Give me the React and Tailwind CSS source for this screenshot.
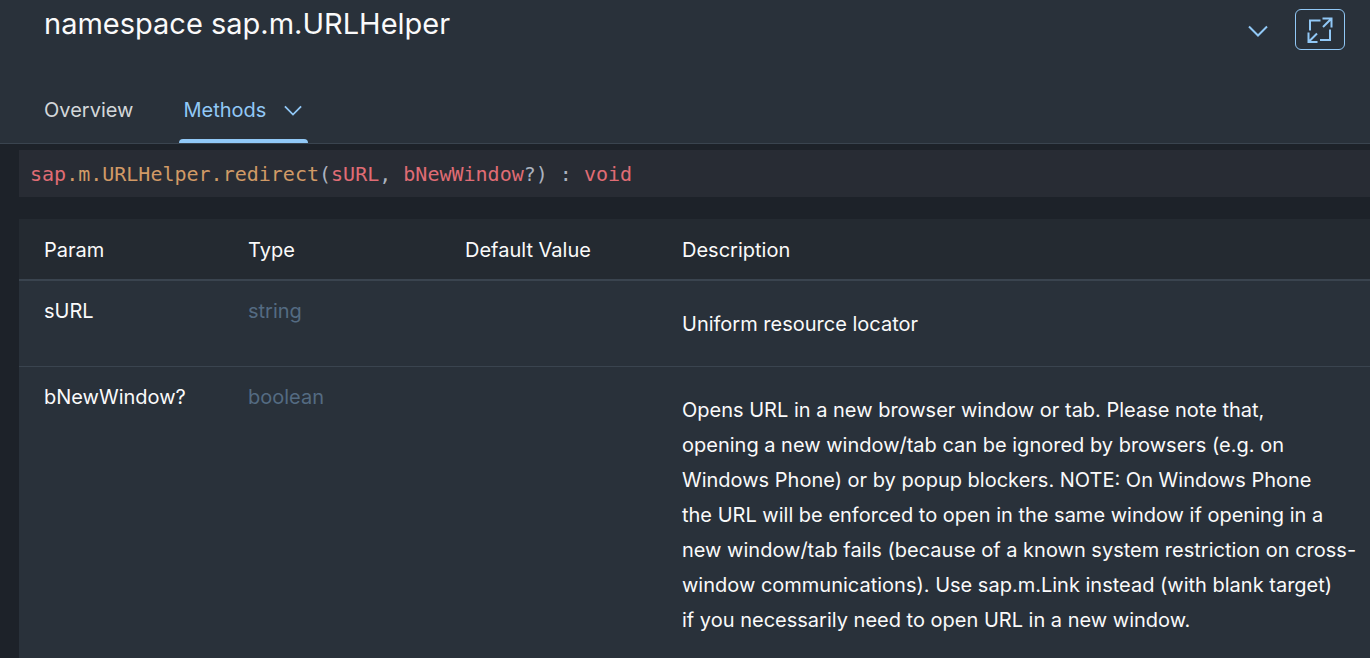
const params = [
  {
    name: 'sURL',
    type: 'string',
    description: ['Uniform resource locator'],
  },
  {
    name: 'bNewWindow?',
    type: 'boolean',
    description: [
      'Opens URL in a new browser window or tab. Please note that,',
      'opening a new window/tab can be ignored by browsers (e.g. on',
      'Windows Phone) or by popup blockers. NOTE: On Windows Phone',
      'the URL will be enforced to open in the same window if opening in a',
      'new window/tab fails (because of a known system restriction on cross-',
      'window communications). Use sap.m.Link instead (with blank target)',
      'if you necessarily need to open URL in a new window.',
    ],
  },
];

function Chevron({ className }) {
  return (
    <svg className={className} viewBox="0 0 20 12" fill="none" stroke="currentColor" strokeWidth="2" aria-hidden="true">
      <path d="M1 1.5 10 10.5 19 1.5" />
    </svg>
  );
}

function FullScreenIcon() {
  return (
    <svg className="h-[26px] w-[26px]" viewBox="0 0 26 26" fill="none" stroke="currentColor" strokeWidth="2" aria-hidden="true">
      <path d="M3 13.5V3.5H13.5" />
      <path d="M23 12.5V23H13" />
      <path d="M15.5 1.5H24.5V10.5M24 2 16 10" />
      <path d="M1.5 15.5V25H10.5M2 24.5 10 16.5" />
    </svg>
  );
}

function Header() {
  return (
    <header className="border-b border-[#3a444f] bg-[#29313a]">
      <div className="flex h-[76px] items-start justify-between pr-[25px] pl-11">
        <h1 className="pt-1 text-[29px] leading-10 text-[#fafafa]">namespace sap.m.URLHelper</h1>
        <div className="flex items-center gap-[27px] pt-[9px] text-[#91c8f6]">
          <button type="button" aria-label="Expand header">
            <Chevron className="mt-0.5 h-3 w-5" />
          </button>
          <button
            type="button"
            aria-label="Full screen"
            className="flex h-[41px] w-[50px] items-center justify-center rounded-md border border-[#91c8f6]"
          >
            <FullScreenIcon />
          </button>
        </div>
      </div>
      <nav className="flex h-[67px] gap-[42px] pl-10 text-[20px]">
        <a href="#overview" className="flex items-center px-1 text-[#d3d7d9]">
          Overview
        </a>
        <a href="#methods" aria-current="true" className="relative flex items-center gap-[18px] px-1 pr-1.5 text-[#91c8f6]">
          Methods
          <Chevron className="mt-0.5 h-[11px] w-[18px]" />
          <span className="absolute inset-x-0 bottom-0 h-1 rounded-t-sm bg-[#91c8f6]" />
        </a>
      </nav>
    </header>
  );
}

function Signature() {
  return (
    <pre className="bg-[#282c34] px-[11px] pt-[9px] pb-[7px] font-['DejaVu_Sans_Mono',monospace] text-[20px] leading-[31px] text-[#abb2bf]">
      <code className="font-[inherit]">
        <span className="text-[#e06c75]">sap</span>
        <span className="text-[#d19a66]">.m.URLHelper.redirect</span>(<span className="text-[#e06c75]">sURL</span>
        {', '}
        <span className="text-[#e06c75]">bNewWindow</span>
        {'?) : '}
        <span className="text-[#e06c75]">void</span>
      </code>
    </pre>
  );
}

function ParamTable() {
  return (
    <table className="mt-[22px] w-full table-fixed bg-[#29313a] text-left text-[20px] text-[#fafafa]">
      <thead>
        <tr className="h-[61px] border-b-2 border-[#3a444f] bg-[#242a31]">
          <th className="w-[217px] pt-0.5 pl-[25px] font-normal">Param</th>
          <th className="w-[217px] pt-0.5 pl-3 font-normal">Type</th>
          <th className="w-[217px] pt-0.5 pl-3 font-normal">Default Value</th>
          <th className="pt-0.5 pl-3 font-normal">Description</th>
        </tr>
      </thead>
      <tbody>
        {params.map((p) => (
          <tr key={p.name} className="border-b border-[#3a444f] align-top leading-[35px]">
            <td className="pt-[13px] pl-[25px]">{p.name}</td>
            <td className="pt-[13px] pl-3 text-[#546b82]">{p.type}</td>
            <td />
            <td className="pt-[26px] pb-6 pl-3">
              {p.description.map((line) => (
                <span key={line} className="block">{line} </span>
              ))}
            </td>
          </tr>
        ))}
      </tbody>
    </table>
  );
}

export default function App() {
  return (
    <div className="h-screen overflow-hidden bg-[#1d2229] font-[Inter,sans-serif]">
      <Header />
      <main className="pt-1.5 pl-[19px]">
        <Signature />
        <ParamTable />
      </main>
    </div>
  );
}
